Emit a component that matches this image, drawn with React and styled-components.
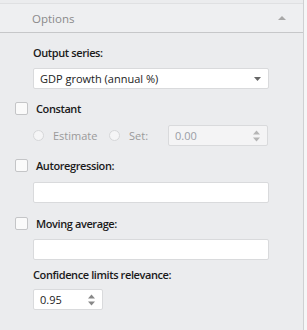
import React from "react";
import styled, { createGlobalStyle } from "styled-components";

const Global = createGlobalStyle`
  html, body {
    margin: 0;
    padding: 0;
    background: #ebecee;
  }
  body {
    font-family: "Open Sans", "Noto Sans", sans-serif;
    font-size: 11px;
    color: #1e1e1e;
  }
`;

const Panel = styled.div`
  display: flex;
  width: 307px;
  height: 330px;
  background: #ebecee;
`;

const Main = styled.div`
  flex: 1;
  display: flex;
  flex-direction: column;
  padding-top: 3px;
`;

const Edge = styled.div`
  width: 3px;
  border-left: 1px solid #cfd0d2;
  background: #f6f6f7;
`;

const Header = styled.div`
  display: flex;
  align-items: center;
  justify-content: space-between;
  height: 28px;
  padding: 0 17px 0 32px;
  background: #eeeff1;
  border-top: 1px solid #dfe0e2;
  border-bottom: 1px solid #c6c7c9;
  color: #8a8a8a;
  font-size: 11.5px;
`;

const Body = styled.div`
  display: flex;
  flex-direction: column;
  padding: 0 0 0 15px;
`;

const Label = styled.div`
  margin-top: ${(p) => p.$mt}px;
  margin-left: ${(p) => (p.$indent ? 18 : 0)}px;
  height: 16px;
  line-height: 16px;
  font-weight: 600;
  letter-spacing: -0.4px;
  color: #1a1a1a;
`;

const CheckRow = styled.label`
  display: flex;
  align-items: center;
  gap: 8px;
  height: 16px;
  margin-top: ${(p) => p.$mt}px;
  font-weight: 600;
  letter-spacing: -0.4px;
  color: #1a1a1a;
`;

const Box = styled.span`
  width: 11px;
  height: 11px;
  border: 1px solid #c4c5c7;
  border-radius: 2px;
  background: #fafafa;
`;

const Field = styled.div`
  display: flex;
  align-items: center;
  justify-content: space-between;
  box-sizing: border-box;
  margin-top: ${(p) => p.$mt}px;
  margin-left: ${(p) => p.$ml ?? 18}px;
  width: ${(p) => p.$w}px;
  height: 21px;
  padding: 0 7px 0 6px;
  background: ${(p) => (p.$disabled ? "#f4f4f5" : "#ffffff")};
  border: 1px solid #d9dadc;
  border-radius: 2px;
  color: ${(p) => (p.$disabled ? "#9a9ea6" : "#222")};
`;

const RadioRow = styled.div`
  display: flex;
  align-items: center;
  margin-top: 9px;
  margin-left: 18px;
  color: #9a9a9a;
`;

const Radio = styled.span`
  box-sizing: border-box;
  width: 11px;
  height: 11px;
  border: 1px solid #d6d7d9;
  border-radius: 50%;
  background: #f5f5f6;
  margin-right: 9px;
`;

const RadioText = styled.span`
  display: inline-block;
  width: ${(p) => p.$w}px;
`;

const Caret = () => (
  <svg width="7" height="4" viewBox="0 0 7 4">
    <path d="M0 0h7L3.5 4z" fill="#666" />
  </svg>
);

const Spinner = ({ color }) => (
  <svg width="7" height="12" viewBox="0 0 7 12">
    <path d="M0 4.5h7L3.5 0.5z" fill={color} />
    <path d="M0 7.5h7L3.5 11.5z" fill={color} />
  </svg>
);

const Up = () => (
  <svg width="8" height="4" viewBox="0 0 8 4">
    <path d="M0 4h8L4 0z" fill="#a8a8a8" />
  </svg>
);

export default function App() {
  return (
    <Panel>
      <Global />
      <Main>
        <Header>
          <span>Options</span>
          <Up />
        </Header>
        <Body>
          <Label $mt={12} $indent>
            Output series:
          </Label>
          <Field $mt={7} $w={236}>
            <span>GDP growth (annual %)</span>
            <Caret />
          </Field>

          <CheckRow $mt={11}>
            <Box />
            Constant
          </CheckRow>
          <RadioRow>
            <Radio />
            <RadioText $w={56}>Estimate</RadioText>
            <Radio />
            <RadioText $w={39}>Set:</RadioText>
            <Field $mt={0} $ml={0} $w={100} $disabled>
              <span>0.00</span>
              <Spinner color="#b5b5b5" />
            </Field>
          </RadioRow>

          <CheckRow $mt={11}>
            <Box />
            Autoregression:
          </CheckRow>
          <Field $mt={9} $w={236} />

          <CheckRow $mt={12}>
            <Box />
            Moving average:
          </CheckRow>
          <Field $mt={8} $w={236} />

          <Label $mt={7} $indent>
            Confidence limits relevance:
          </Label>
          <Field $mt={6} $w={70}>
            <span>0.95</span>
            <Spinner color="#888" />
          </Field>
        </Body>
      </Main>
      <Edge />
    </Panel>
  );
}
